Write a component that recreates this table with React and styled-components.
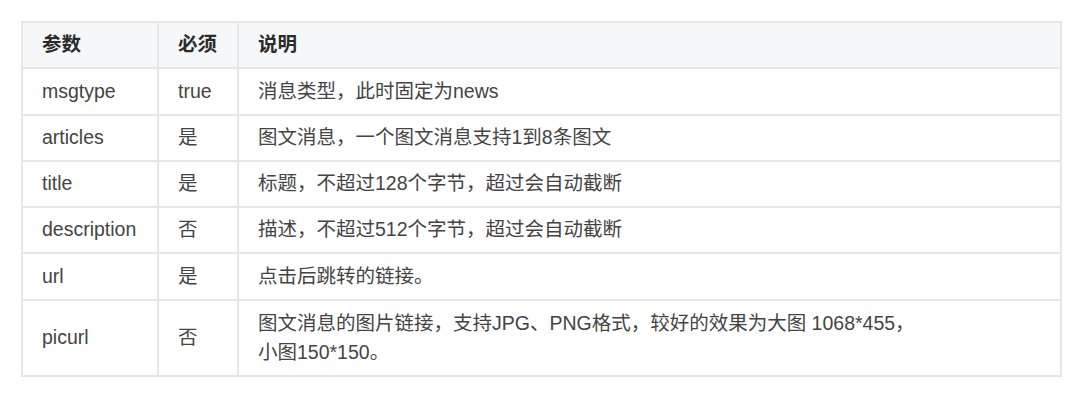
import React from 'react';
import styled, { createGlobalStyle } from 'styled-components';

const GlobalStyle = createGlobalStyle`
  body {
    margin: 0;
    background: #fff;
    font-family: 'Liberation Sans', 'Noto Sans CJK SC', sans-serif;
  }
`;

const Page = styled.div`
  padding: 21px 0 0 21px;
`;

const Table = styled.table`
  border-collapse: collapse;
  width: 1041px;
  table-layout: fixed;
  font-size: 19.5px;
  line-height: 29px;
  color: #444;
  & td,
  & th {
    border: 2px solid #e6e6e6;
    padding: 7.3px 19px 8px;
    vertical-align: middle;
    text-align: left;
  }
`;

const HeadRow = styled.tr`
  background: #f6f7f9;
  & th {
    font-weight: bold;
    color: #2b2b2b;
  }
`;

const Row = styled.tr`
  background: #fff;
  &:last-child td {
    padding-top: 8px;
    padding-bottom: 8.5px;
  }
`;

const rows = [
  { name: 'msgtype', req: 'true', desc: '消息类型，此时固定为news' },
  { name: 'articles', req: '是', desc: '图文消息，一个图文消息支持1到8条图文' },
  { name: 'title', req: '是', desc: '标题，不超过128个字节，超过会自动截断' },
  { name: 'description', req: '否', desc: '描述，不超过512个字节，超过会自动截断' },
  { name: 'url', req: '是', desc: '点击后跳转的链接。' },
  {
    name: 'picurl',
    req: '否',
    desc: (
      <>
        图文消息的图片链接，支持JPG、PNG格式，较好的效果为大图 1068*455，
        <br />
        小图150*150。
      </>
    ),
  },
];

export default function App() {
  return (
    <Page>
      <GlobalStyle />
      <Table>
        <colgroup>
          <col style={{ width: 136 }} />
          <col style={{ width: 80 }} />
          <col />
        </colgroup>
        <thead>
          <HeadRow>
            <th>参数</th>
            <th>必须</th>
            <th>说明</th>
          </HeadRow>
        </thead>
        <tbody>
          {rows.map((r) => (
            <Row key={r.name}>
              <td>{r.name}</td>
              <td>{r.req}</td>
              <td>{r.desc}</td>
            </Row>
          ))}
        </tbody>
      </Table>
    </Page>
  );
}
